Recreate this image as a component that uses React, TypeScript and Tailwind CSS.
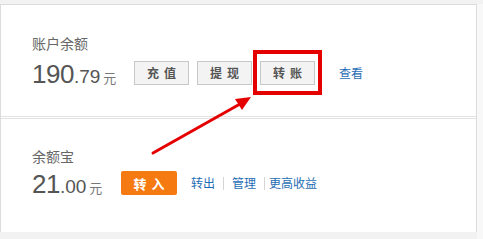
import React from 'react';

const cjk = { fontFamily: '"Noto Sans CJK SC", sans-serif' };
const num = { fontFamily: '"Liberation Sans", Arial, sans-serif' };

const GrayButton: React.FC<{ label: string }> = ({ label }) => (
  <button
    className="w-[55px] h-[24px] border border-[#c8c8c8] bg-[#f3f3f3] text-[12px] font-bold text-[#555] tracking-[5px] pl-[5px] leading-none"
    style={cjk}
  >
    {label}
  </button>
);

export default function App() {
  return (
    <div className="relative w-[483px] h-[239px] bg-[#f2f2f2] overflow-hidden pt-[4px] flex">
      <div className="w-[477px] h-[228px] bg-white border-l border-t border-r border-[#dcdcdc] flex flex-col">
        {/* account balance */}
        <div className="h-[112px] border-b border-[#e2e2e2] pl-[31px] pt-[28px]">
          <p className="text-[14px] leading-[20px] text-[#666]" style={cjk}>账户余额</p>
          <div className="mt-[8px] h-[24px] flex items-center">
            <div className="flex items-baseline text-[#555] w-[82px] mt-[2px]" style={num}>
              <span className="text-[26px] leading-none tracking-[-0.5px]">190</span>
              <span className="text-[19px] leading-none">.79</span>
              <span className="text-[13px] leading-none text-[#777] ml-[3px]" style={cjk}>元</span>
            </div>
            <div className="ml-[20px] flex gap-[8px]">
              <GrayButton label="充值" />
              <GrayButton label="提现" />
              <GrayButton label="转账" />
            </div>
            <a className="ml-[24px] text-[12px] text-[#1f6db5]" style={cjk}>查看</a>
          </div>
        </div>
        <div className="h-[2px] border-b border-[#e2e2e2]" />
        {/* yu e bao */}
        <div className="flex-1 pl-[31px] pt-[27px]">
          <p className="text-[14px] leading-[20px] text-[#666]" style={cjk}>余额宝</p>
          <div className="mt-[5px] h-[24px] flex items-center">
            <div className="flex items-baseline text-[#555] w-[69px] mt-[2px]" style={num}>
              <span className="text-[26px] leading-none tracking-[-0.5px]">21</span>
              <span className="text-[19px] leading-none">.00</span>
              <span className="text-[13px] leading-none text-[#777] ml-[3px]" style={cjk}>元</span>
            </div>
            <button
              className="ml-[20px] w-[56px] h-[24px] rounded-[2px] bg-[#f57a12] text-white text-[13px] font-bold tracking-[5px] pl-[5px] leading-none"
              style={cjk}
            >
              转入
            </button>
            <div className="ml-[14px] flex items-center text-[12px] text-[#1f6db5]" style={cjk}>
              <a>转出</a>
              <span className="mx-[8px] w-px h-[13px] bg-[#d5d5d5]" />
              <a>管理</a>
              <span className="ml-[8px] mr-[4px] w-px h-[13px] bg-[#d5d5d5]" />
              <a>更高收益</a>
            </div>
          </div>
        </div>
      </div>
      <div className="flex-1 bg-[#f8f8f8]" />

      {/* annotation: red highlight box */}
      <div className="absolute left-[253px] top-[50px] w-[69px] h-[45px] border-[4px] border-[#e50000]" />
      {/* annotation: arrow */}
      <svg className="absolute left-0 top-0" width="483" height="239" viewBox="0 0 483 239">
        <line x1="153" y1="153" x2="240" y2="104" stroke="#e50000" strokeWidth="3" strokeLinecap="round" />
        <polygon points="251,97 235,99 242,110" fill="#e50000" />
      </svg>
    </div>
  );
}
